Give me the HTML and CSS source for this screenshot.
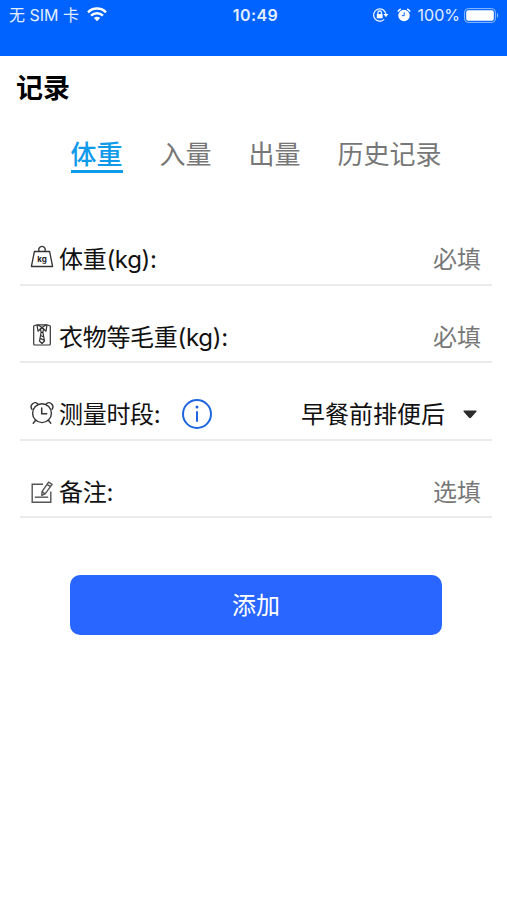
FILE: index.html
```
<!DOCTYPE html>
<html lang="zh-CN">
<head>
    <meta charset="UTF-8">
    <meta name="viewport" content="width=device-width, initial-scale=1.0">
    <title>记录</title>
    <link rel="stylesheet" href="styles.css">
</head>
<body>
    <header class="status-bar">
        <div class="status-left">
            <span>无 SIM 卡</span>
            <svg class="wifi" width="20" height="15" viewBox="0 0 20 15" fill="none" stroke="#fff" stroke-width="2.5">
                <path d="M1 5.3a12.7 12.7 0 0 1 18 0"/>
                <path d="M4.1 8.6a8.3 8.3 0 0 1 11.8 0"/>
                <path d="M10 14.3l-3.2-3.2a4.5 4.5 0 0 1 6.4 0z" fill="#fff" stroke="none"/>
            </svg>
        </div>
        <div class="status-time">10:49</div>
        <div class="status-right">
            <svg class="lock" width="17" height="16" viewBox="0 0 17 16" fill="none" stroke="#e3efff" stroke-width="1.3">
                <path d="M12.2 12.4A6.2 6.2 0 1 1 13.9 7"/>
                <path d="M11.5 7h4.8l-2.4 3.2z" fill="#fff" stroke="none"/>
                <rect x="4.8" y="7" width="5.8" height="4.3" fill="#fff" stroke="none"/>
                <path d="M5.9 7V5.8a1.8 1.8 0 0 1 3.6 0V7"/>
            </svg>
            <svg class="alarm" width="14" height="14" viewBox="0 0 14 14" fill="none">
                <circle cx="7" cy="7.5" r="5.7" fill="#fff"/>
                <path d="M.8 3.7a7 7 0 0 1 3-2.7M13.2 3.7a7 7 0 0 0-3-2.7" stroke="#fff" stroke-width="1.4"/>
                <path d="M7.2 4.2v3.5H4.8" stroke="#0062ff" stroke-width="1"/>
            </svg>
            <span class="percent">100%</span>
            <svg class="battery" width="35" height="15" viewBox="0 0 35 15" fill="none">
                <rect x=".6" y=".6" width="30.8" height="13.8" rx="3.5" stroke="#8fbcff"/>
                <rect x="2.2" y="2.2" width="27.6" height="10.6" rx="2" fill="#fff"/>
                <path d="M33 5c1.6.7 1.6 4.3 0 5z" fill="#8fbcff"/>
            </svg>
        </div>
    </header>

    <h1 class="title">记录</h1>

    <nav class="tabs">
        <a class="tab active">体重</a>
        <a class="tab">入量</a>
        <a class="tab">出量</a>
        <a class="tab">历史记录</a>
    </nav>

    <main class="form">
        <div class="row">
            <svg class="icon" width="24" height="24" viewBox="0 0 24 24" fill="none" stroke="#333" stroke-width="1.3">
                <path d="M4.4 6.5h15.2l3 15H1.4z" stroke-linejoin="round"/>
                <path d="M9.3 6.4a3.2 3.2 0 1 1 5.4 0"/>
                <text class="icon-text" x="12" y="16.5" text-anchor="middle">kg</text>
            </svg>
            <span class="label">体重(kg):</span>
            <span class="value hint">必填</span>
        </div>
        <div class="row">
            <svg class="icon" width="24" height="24" viewBox="0 0 24 24" fill="none" stroke="#333" stroke-width="1.2" stroke-linejoin="round">
                <path d="M7 1.8L3.7 3v18a1 1 0 0 0 1 1h14.6a1 1 0 0 0 1-1V3L17 1.8z"/>
                <path d="M7 1.8l1 6.4 4-3.7 4 3.7 1-6.4M8 2l4 2.5L16 2"/>
                <path d="M10.5 5.8L12 4.5l1.5 1.3-.6 3.5h-1.8zM11.1 9.3L9.5 18l2.5 2.5 2.5-2.5-1.6-8.7M10.8 12.5l2.3 1.2M10.2 15.3l3.6 1.8"/>
            </svg>
            <span class="label">衣物等毛重(kg):</span>
            <span class="value hint">必填</span>
        </div>
        <div class="row">
            <svg class="icon clock" width="24" height="24" viewBox="0 0 24 24" fill="none" stroke="#333" stroke-width="1.4" stroke-linecap="round">
                <circle cx="12" cy="12.2" r="9.4"/>
                <path d="M2 8.3C-.8 4.4 3.9-.3 7.6 2.7M22 8.3c2.8-3.9-1.9-8.6-5.6-5.6"/>
                <path d="M5.7 19.3L3.2 22.2M18.3 19.3l2.5 2.9"/>
                <path d="M11.7 7v5.8h5" stroke-width="1.5"/>
            </svg>
            <span class="label">测量时段:</span>
            <svg class="info" width="32" height="32" viewBox="0 0 32 32" fill="none" stroke="#1e66e0" stroke-width="2">
                <circle cx="16" cy="16" r="14"/>
                <path d="M16 13.3v10.4"/>
                <circle cx="16" cy="9" r="1.5" fill="#1e66e0" stroke="none"/>
            </svg>
            <span class="value">早餐前排便后</span>
            <svg class="arrow" width="14" height="9" viewBox="0 0 14 9" fill="#2b2b2b">
                <path d="M1.2.5h11.6c.8 0 1 .7.5 1.2L8 7.8c-.6.6-1.4.6-2 0L.7 1.7C.2 1.2.4.5 1.2.5z"/>
            </svg>
        </div>
        <div class="row">
            <svg class="icon note" width="24" height="24" viewBox="0 0 24 24" fill="none" stroke="#555" stroke-width="1.4">
                <path d="M13 4.2H2.2v18h18.6V11.5"/>
                <path d="M4.8 17.2h13.4"/>
                <path d="M18.6 2.1l3.5 2.2-7 9.6-3.3 1.5.2-3.8zM17 4.3l3.5 2.3M12 11.6l3.1 2.3" stroke-linejoin="round"/>
            </svg>
            <span class="label">备注:</span>
            <span class="value hint">选填</span>
        </div>
    </main>

    <button class="submit">添加</button>
</body>
</html>
```
FILE: styles.css
```
* {
    box-sizing: border-box;
}

body {
    margin: 0;
    background: #fff;
    color: #111;
    font-family: Inter, "Noto Sans CJK SC", sans-serif;
}

/* 状态栏 */
.status-bar {
    display: grid;
    grid-template-columns: 1fr auto 1fr;
    align-items: start;
    height: 56px;
    padding: 4px 8px 0 12px;
    background: #0062ff;
    color: #e3efff;
    font-size: 16px;
    line-height: 22px;
}

.status-left,
.status-right {
    display: flex;
    align-items: center;
    height: 22px;
    white-space: nowrap;
}

.status-left {
    margin-left: -3px;
}

.status-right {
    justify-content: flex-end;
}

.status-time {
    font-weight: 600;
    letter-spacing: 0.4px;
}

.wifi {
    margin: -2px 0 0 8px;
}

.lock,
.alarm {
    margin-top: -1px;
}

.alarm {
    margin-left: 8px;
}

.percent {
    margin: 0 4px 0 7px;
}

/* 标题 */
.title {
    margin: 0;
    padding: 13px 16px 0;
    color: #000;
    font-size: 27px;
    font-weight: 700;
    line-height: 40px;
}

/* 选项卡 */
.tabs {
    display: flex;
    gap: 37px;
    padding: 27px 0 0 70.5px;
}

.tab {
    height: 37px;
    color: #777;
    font-size: 26px;
    line-height: 38px;
}

.tab.active {
    border-bottom: 3px solid #109bea;
    color: #109bea;
    font-weight: 500;
}

/* 表单 */
.form {
    padding: 35px 15px 0 20px;
}

.row {
    display: flex;
    align-items: center;
    height: 77.5px;
    padding: 29px 11px 0 10px;
    border-bottom: 2px solid #ebebeb;
    font-size: 24px;
    line-height: 36px;
}

.icon {
    margin: -6px 5px 0 0;
}

.icon.clock {
    margin-top: -4px;
}

.icon.note {
    margin-top: -2px;
}

.icon-text {
    fill: #222;
    stroke: none;
    font-size: 8px;
    font-weight: 700;
}

.label {
    letter-spacing: -0.3px;
}

.info {
    margin: -2px 0 0 20.5px;
}

.value {
    margin-left: auto;
}

.hint {
    color: #777;
}

.arrow {
    margin: -2px 4px 0 18px;
}

/* 提交按钮 */
.submit {
    display: block;
    width: 372px;
    height: 60px;
    margin: 57px 0 0 70px;
    padding: 0 0 3px;
    border: none;
    border-radius: 10px;
    background: #2966ff;
    color: #fff;
    font-family: inherit;
    font-size: 24px;
    cursor: pointer;
}
```
